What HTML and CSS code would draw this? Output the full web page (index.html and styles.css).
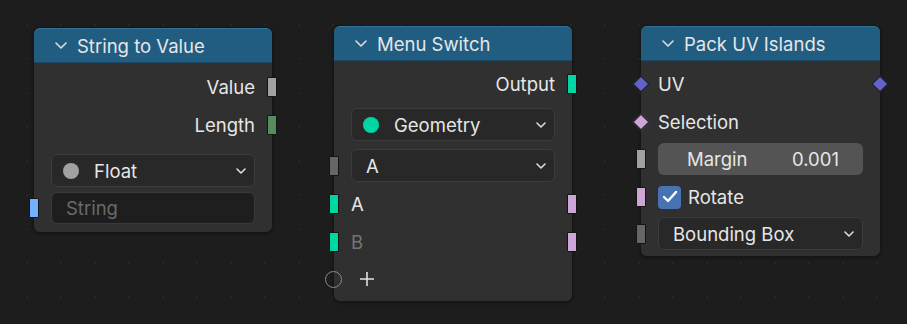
FILE: index.html
```html
<!DOCTYPE html>
<html lang="en">
<head>
  <meta charset="UTF-8" />
  <title>Node Editor</title>
  <link rel="stylesheet" href="styles.css">
</head>
<body>

<div class="canvas">

  <!-- String to Value -->
  <div class="node node-stv">
    <div class="node-head">
      <svg class="head-chev" width="12" height="8" viewBox="0 0 12 8"><polyline points="1,1 6,6 11,1" /></svg>
      <span>String to Value</span>
    </div>
    <div class="node-body">
      <div class="row out"><span>Value</span><i class="sock sq right c-float"></i></div>
      <div class="row out"><span>Length</span><i class="sock sq right c-int"></i></div>
      <div class="dropdown mt-10">
        <i class="dot c-float"></i><span class="dd-text">Float</span>
        <svg class="dd-chev" width="10" height="6" viewBox="0 0 10 6"><polyline points="1,1 5,5 9,1" /></svg>
      </div>
      <div class="field mt-5">
        <i class="sock sq left c-string"></i>
        <span class="placeholder">String</span>
      </div>
    </div>
  </div>

  <!-- Menu Switch -->
  <div class="node node-menu">
    <div class="node-head">
      <svg class="head-chev" width="12" height="8" viewBox="0 0 12 8"><polyline points="1,1 6,6 11,1" /></svg>
      <span>Menu Switch</span>
    </div>
    <div class="node-body">
      <div class="row out"><span>Output</span><i class="sock sq right c-geo"></i></div>
      <div class="dropdown mt-5">
        <i class="dot c-geo"></i><span class="dd-text">Geometry</span>
        <svg class="dd-chev" width="10" height="6" viewBox="0 0 10 6"><polyline points="1,1 5,5 9,1" /></svg>
      </div>
      <div class="dropdown plain mt-8">
        <i class="sock sq left c-menu"></i>
        <span>A</span>
        <svg class="dd-chev" width="10" height="6" viewBox="0 0 10 6"><polyline points="1,1 5,5 9,1" /></svg>
      </div>
      <div class="row mt-3"><i class="sock sq left c-geo"></i><span>A</span><i class="sock sq right c-bool"></i></div>
      <div class="row"><i class="sock sq left c-geo"></i><span class="muted">B</span><i class="sock sq right c-bool"></i></div>
      <div class="row short">
        <i class="sock ring left"></i>
        <svg class="plus" width="16" height="16" viewBox="0 0 16 16"><path d="M8 1v14M1 8h14" /></svg>
      </div>
    </div>
  </div>

  <!-- Pack UV Islands -->
  <div class="node node-pack">
    <div class="node-head">
      <svg class="head-chev" width="12" height="8" viewBox="0 0 12 8"><polyline points="1,1 6,6 11,1" /></svg>
      <span>Pack UV Islands</span>
    </div>
    <div class="node-body">
      <div class="row"><i class="sock dia left c-uv"></i><span>UV</span><i class="sock dia right c-uv"></i></div>
      <div class="row"><i class="sock dia left c-bool"></i><span>Selection</span></div>
      <div class="num mt-2">
        <i class="sock sq left c-float"></i>
        <span>Margin</span><span>0.001</span>
      </div>
      <div class="row check-row mt-3">
        <i class="sock sq left c-bool"></i>
        <span class="check">
          <svg width="16" height="14" viewBox="0 0 16 14"><polyline points="2,7 6,11 14,2" /></svg>
        </span>
        <span>Rotate</span>
      </div>
      <div class="dropdown plain mt-1">
        <i class="sock sq left c-menu"></i>
        <span>Bounding Box</span>
        <svg class="dd-chev" width="10" height="6" viewBox="0 0 10 6"><polyline points="1,1 5,5 9,1" /></svg>
      </div>
    </div>
  </div>

</div>

</body>
</html>
```

FILE: styles.css
```css
:root {
  --bg: #1d1d1d;
  --node-bg: #303030;
  --node-border: #161616;
  --head-bg: #215d80;
  --text: #e6e6e6;
  --muted: #757575;
  --dd-bg: #282828;
  --dd-border: #3c3c3c;
}

* {
  margin: 0;
  padding: 0;
  box-sizing: border-box;
}

body {
  background-color: var(--bg);
  font-family: 'Inter', 'Noto Sans', sans-serif;
  font-size: 18.5px;
  color: var(--text);
  width: 907px;
  height: 324px;
  overflow: hidden;
}

.canvas {
  position: relative;
  width: 907px;
  height: 324px;
  background-image: radial-gradient(circle, #262626 1px, transparent 1.2px);
  background-size: 34px 34px;
  background-position: 10px 8px;
}

/* nodes sit freely on the editor canvas */
.node {
  position: absolute;
  width: 240px;
  background-color: var(--node-bg);
  border: 1px solid var(--node-border);
  border-radius: 7px;
  box-shadow: 0 1px 3px rgba(0, 0, 0, 0.35);
}

.node-stv { left: 33px; top: 27px; }
.node-menu { left: 333px; top: 25px; }
.node-pack { left: 640px; top: 25px; width: 241px; }

.node-head {
  display: flex;
  align-items: center;
  height: 35px;
  padding-left: 21px;
  gap: 10px;
  background-color: var(--head-bg);
  border-radius: 6px 6px 0 0;
  border-top: 1px solid #2f7399;
  border-bottom: 1px solid #1b4a66;
}

.head-chev polyline,
.dd-chev polyline {
  fill: none;
  stroke: #dcdcdc;
  stroke-width: 1.6;
  stroke-linecap: round;
  stroke-linejoin: round;
}

.node-body {
  padding: 5px 17px 8px;
}

.node-menu .node-body { padding-top: 4px; padding-bottom: 4px; }
.node-pack .node-body { padding-top: 4px; padding-bottom: 6px; }

.row {
  position: relative;
  display: flex;
  align-items: center;
  height: 38px;
}

.row.out { justify-content: flex-end; }
.row.short { height: 36px; }

.muted { color: var(--muted); }

.mt-1 { margin-top: 1px; }
.mt-2 { margin-top: 2px; }
.mt-3 { margin-top: 3px; }
.mt-5 { margin-top: 5px; }
.mt-8 { margin-top: 8px; }
.mt-10 { margin-top: 10px; }

/* sockets */
.sock {
  position: absolute;
  top: 50%;
  display: block;
}

.sock.sq {
  width: 10px;
  height: 20px;
  margin-top: -10px;
  border: 1px solid #141414;
  border-radius: 1px;
}

.sock.left { left: -22px; }
.sock.right { right: -22px; }

.sock.dia {
  width: 12px;
  height: 12px;
  margin-top: -6px;
  border: 1px solid #141414;
  transform: rotate(45deg);
}

.sock.dia.left { left: -23px; }
.sock.dia.right { right: -23px; }

.sock.ring {
  width: 17px;
  height: 17px;
  margin-top: -8px;
  left: -26px;
  border: 1.5px solid #8a8a8a;
  border-radius: 50%;
}

.c-float { background-color: #a1a1a1; }
.c-int { background-color: #598c5c; }
.c-string { background-color: #70b2ff; }
.c-geo { background-color: #00d6a3; }
.c-bool { background-color: #cca6d6; }
.c-uv { background-color: #6363c7; }
.c-menu { background-color: #666666; }

.plus {
  margin-left: 8px;
}

.plus path {
  stroke: #e0e0e0;
  stroke-width: 1.6;
}

/* widgets */
.dropdown {
  position: relative;
  display: flex;
  align-items: center;
  height: 33px;
  padding: 0 8px 0 11px;
  background-color: var(--dd-bg);
  border: 1px solid var(--dd-border);
  border-radius: 6px;
}

.dropdown.plain { padding-left: 14px; }

.dropdown .sock.left { left: -23px; }

.dot {
  width: 16px;
  height: 16px;
  border-radius: 50%;
  margin-right: 15px;
}

.dd-text { flex: 1; }
.dropdown.plain span { flex: 1; }

.field {
  position: relative;
  display: flex;
  align-items: center;
  height: 32px;
  padding-left: 14px;
  background-color: #1e1e1e;
  border: 1px solid #3a3a3a;
  border-radius: 6px;
}

.field .sock.left { left: -23px; }

.placeholder { color: #6a6a6a; }

.num {
  position: relative;
  display: flex;
  align-items: center;
  justify-content: space-between;
  height: 32px;
  padding: 0 24px 0 29px;
  background-color: #545454;
  border-radius: 6px;
}

.num .sock.left { left: -22px; }

.check-row {
  gap: 7px;
}

.check {
  display: flex;
  align-items: center;
  justify-content: center;
  width: 23px;
  height: 23px;
  background-color: #4772b3;
  border-radius: 4px;
}

.check polyline {
  fill: none;
  stroke: #ffffff;
  stroke-width: 2.4;
  stroke-linecap: round;
  stroke-linejoin: round;
}
```
